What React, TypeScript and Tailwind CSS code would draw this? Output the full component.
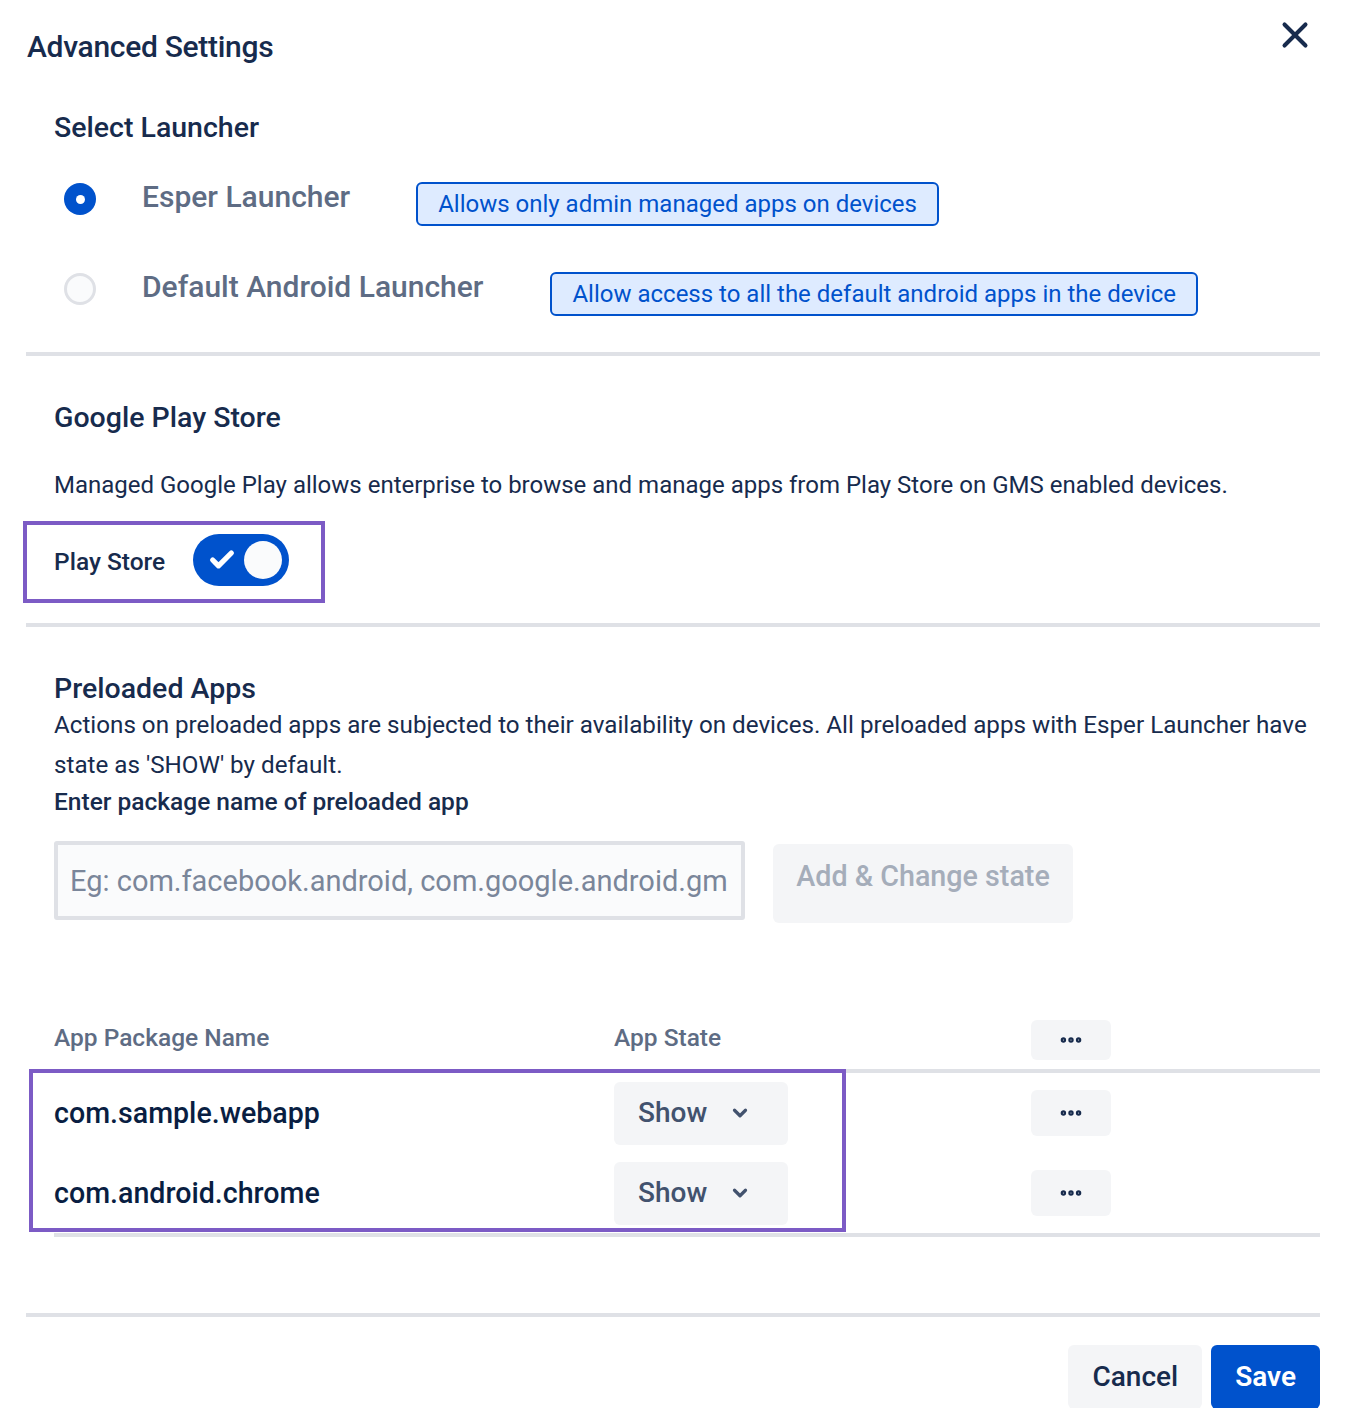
import { X, ChevronDown, MoreHorizontal, Check } from 'lucide-react';

const apps = [
  { name: 'com.sample.webapp', state: 'Show' },
  { name: 'com.android.chrome', state: 'Show' },
];

function Radio({ checked }: { checked: boolean }) {
  return checked ? (
    <div className="w-[32px] h-[32px] rounded-full bg-[#0052cc] flex items-center justify-center">
      <div className="w-[9px] h-[9px] rounded-full bg-white" />
    </div>
  ) : (
    <div className="w-[32px] h-[32px] rounded-full bg-[#fafbfc] border-[3px] border-[#dfe1e6]" />
  );
}

function DotsButton() {
  return (
    <button className="w-[80px] h-[46px] rounded-md bg-[#f4f5f7] flex items-center justify-center text-[#172b4d]">
      <MoreHorizontal size={26} strokeWidth={3} />
    </button>
  );
}

export default function App() {
  return (
    <div className="w-[1354px] min-h-[1408px] bg-white font-['Roboto',sans-serif] text-[#172b4d] overflow-hidden">
      {/* Header */}
      <div className="flex items-start justify-between pl-[27px] pr-[38px] pt-[26px]">
        <h1 className="text-[30px] leading-[42px] font-medium tracking-[-0.3px]">Advanced Settings</h1>
        <button className="mt-[-12px] text-[#172b4d]">
          <X size={42} strokeWidth={2.3} />
        </button>
      </div>

      <div className="ml-[26px] mr-[34px]">
        {/* Launcher */}
        <div className="pl-[28px] pt-[42px] pb-[35px] border-b-4 border-[#dfe1e6]">
          <h2 className="text-[28.5px] leading-[36px] font-medium">Select Launcher</h2>
          <div className="mt-[25px] flex items-center h-[56px]">
            <div className="ml-[10px] w-[32px]">
              <Radio checked />
            </div>
            <span className="ml-[46px] text-[30px] font-medium text-[#5e6c84] -mt-[6px]">Esper Launcher</span>
            <span className="ml-[66px] h-[44px] px-[20px] flex items-center rounded-md border-2 border-[#0052cc] bg-[#deebff] text-[#0052cc] text-[24px] mt-[10px]">
              Allows only admin managed apps on devices
            </span>
          </div>
          <div className="mt-[34px] flex items-center h-[56px]">
            <div className="ml-[10px] w-[32px]">
              <Radio checked={false} />
            </div>
            <span className="ml-[46px] text-[30px] font-medium text-[#5e6c84] -mt-[6px]">Default Android Launcher</span>
            <span className="ml-[67px] h-[44px] px-[20px] flex items-center rounded-md border-2 border-[#0052cc] bg-[#deebff] text-[#0052cc] text-[24px] mt-[10px]">
              Allow access to all the default android apps in the device
            </span>
          </div>
        </div>

        {/* Play store */}
        <div className="pl-[28px] pt-[44px] pb-[20px] border-b-4 border-[#dfe1e6]">
          <h2 className="text-[28.5px] leading-[36px] font-medium">Google Play Store</h2>
          <p className="mt-[33px] text-[24px] leading-[32px] text-[#172b4d]">
            Managed Google Play allows enterprise to browse and manage apps from Play Store on GMS enabled devices.
          </p>
          <div className="mt-[20px] ml-[-31px] w-[302px] h-[82px] border-4 border-[#7c5bc5] pl-[27px] flex items-center gap-[28px]">
            <span className="text-[24.5px] font-medium">Play Store</span>
            <div className="w-[96px] h-[52px] rounded-full bg-[#0052cc] flex items-center justify-between pl-[15px] pr-[7px] -mt-[4px]">
              <Check size={28} strokeWidth={4.5} className="text-white" />
              <div className="w-[38px] h-[38px] rounded-full bg-[#fafbfc]" />
            </div>
          </div>
        </div>

        {/* Preloaded apps */}
        <div className="pl-[28px] pt-[44px]">
          <h2 className="text-[28.5px] leading-[36px] font-medium">Preloaded Apps</h2>
          <p className="text-[24.2px] leading-[40px] mt-[-2px]">
            Actions on preloaded apps are subjected to their availability on devices. All preloaded apps with Esper Launcher have state as 'SHOW' by default.
          </p>
          <p className="text-[24.5px] leading-[34px] font-medium">Enter package name of preloaded app</p>
          <div className="mt-[22px] flex items-start gap-[28px]">
            <input
              readOnly
              placeholder="Eg: com.facebook.android, com.google.android.gm"
              className="w-[691px] h-[79px] border-4 border-[#dfe1e6] bg-[#fafbfc] rounded-[3px] px-[12px] text-[29px] placeholder:text-[#7a869a] outline-none"
            />
            <button className="mt-[3px] w-[300px] h-[79px] rounded-md bg-[#f4f5f7] text-[#a5adba] text-[28.7px] font-medium pb-[14px]">
              Add &amp; Change state
            </button>
          </div>

          {/* Table */}
          <div className="mt-[97px] relative">
            <div className="flex items-center h-[40px] text-[24.5px] font-medium text-[#5e6c84]">
              <span className="w-[560px] -mt-[3px]">App Package Name</span>
              <span className="w-[417px] -mt-[3px]">App State</span>
              <div className="w-[80px] h-[40px] rounded-md bg-[#f4f5f7] flex items-center justify-center text-[#172b4d]">
                <MoreHorizontal size={26} strokeWidth={3} />
              </div>
            </div>
            <div className="mt-[9px] border-t-4 border-b-4 border-[#dfe1e6]">
              {apps.map((app) => (
                <div key={app.name} className="flex items-center h-[80px]">
                  <span className="w-[560px] text-[28.6px] font-medium text-[#091e42]">{app.name}</span>
                  <div className="w-[417px]">
                    <button className="w-[174px] h-[63px] rounded-md bg-[#f4f5f7] flex items-center pl-[24px] gap-[22px] text-[28px] font-medium text-[#42526e]">
                      {app.state}
                      <ChevronDown size={22} strokeWidth={3.5} />
                    </button>
                  </div>
                  <DotsButton />
                </div>
              ))}
            </div>
            <div className="absolute left-[-25px] top-[49px] w-[817px] h-[163px] border-4 border-[#7c5bc5] pointer-events-none" />
          </div>
        </div>

        {/* Footer */}
        <div className="mt-[76px] border-t-4 border-[#dfe1e6] pt-[28px] flex justify-end gap-[9px]">
          <button className="h-[64px] px-[24px] rounded-md bg-[#f4f5f7] text-[28px] font-medium text-[#172b4d]">Cancel</button>
          <button className="h-[64px] px-[24px] rounded-md bg-[#0052cc] text-[28px] font-semibold text-white">Save</button>
        </div>
      </div>
    </div>
  );
}
